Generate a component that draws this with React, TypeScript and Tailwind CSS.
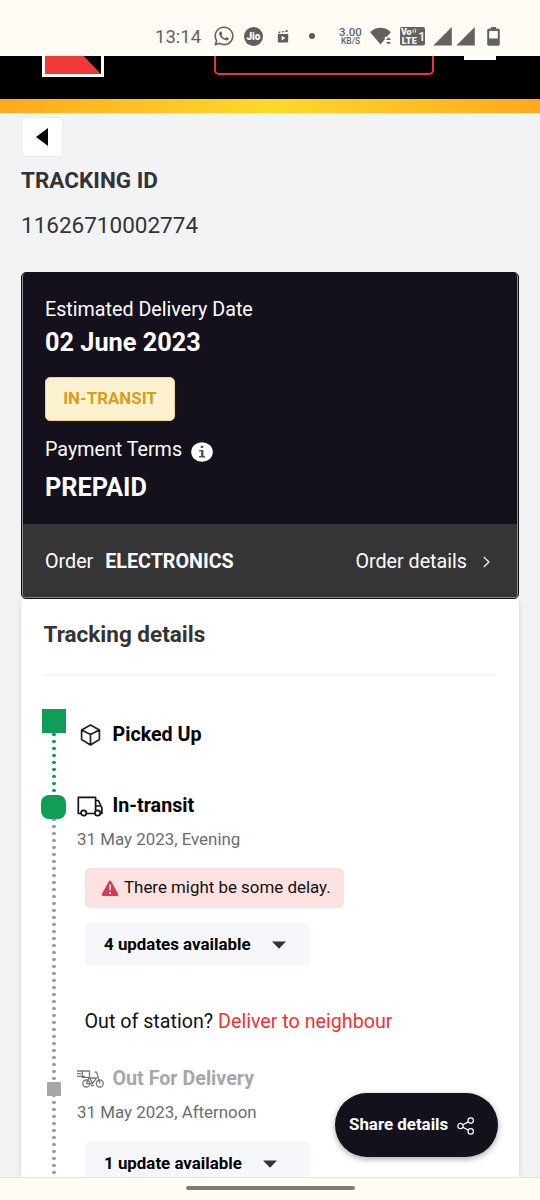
import { FaWhatsapp } from "react-icons/fa";
import { clsx } from "clsx";

// Status bar icons
function ClapperIcon() {
    return (
        <svg width="12" height="13" viewBox="0 0 12 13" fill="#605d5b">
            <path d="M1 3.2 2.2 1.4h1.6L2.6 3.2zM4.4 2.6 5.6.9h1.6L6 2.6zM7.8 2 9 .3h2.4L10.2 2zM.8 4h10.4v7.6a.8.8 0 0 1-.8.8H1.6a.8.8 0 0 1-.8-.8z" />
            <path d="M4.6 5.8v4.6L8.4 8.1z" fill="#fffcf6" />
        </svg>
    );
}

function WifiIcon() {
    return (
        <svg width="22" height="19" viewBox="0 0 22 19" fill="#65615f">
            <path d="M.2 5.2C5.8-.6 15.2-.6 20.8 5.2l-3.9 4.6h-2.1v2.5L10.5 17.4z" />
            <path d="M18.5 10.3 21 13h-5zM18.5 17.6 16 14.9h5z" />
        </svg>
    );
}

function VolteIcon() {
    return (
        <svg width="25" height="19" viewBox="0 0 25 19">
            <rect width="25" height="18.5" rx="1.8" fill="#65615f" />
            <g fill="#fffcf6" fontFamily="Roboto, sans-serif" fontWeight="900">
                <text x="1" y="8.3" fontSize="9" textLength="10.5">Vo</text>
                <text x="1.7" y="16.8" fontSize="9" textLength="15">LTE</text>
                <text x="18.3" y="14" fontSize="12.5" fontWeight="500" textLength="5">1</text>
            </g>
            <path d="M12.5 2.4q1.4 1.3.5 3.2M14.7 1.5q1.8 1.8.5 4.2" fill="none" stroke="#fffcf6" strokeWidth="1" />
        </svg>
    );
}

function SignalIcon() {
    return (
        <svg width="19" height="19" viewBox="0 0 19 19" fill="#65615f">
            <path d="M18.8 0v18.4H.3z" />
        </svg>
    );
}

function BatteryIcon() {
    return (
        <svg width="13" height="19" viewBox="0 0 13 19" fill="#65615f">
            <path fillRule="evenodd" d="M4 0h5v1.5h2.2A1.6 1.6 0 0 1 12.8 3v14.3a1.4 1.4 0 0 1-1.4 1.4H1.6A1.4 1.4 0 0 1 .2 17.3V3a1.6 1.6 0 0 1 1.6-1.5H4zM2.2 4v7.5h8.6V4z" />
        </svg>
    );
}

// Timeline icons
function BoxIcon() {
    return (
        <svg width="21" height="22" viewBox="0 0 21 22" fill="none" stroke="#222" strokeWidth="1.7" strokeLinejoin="round" strokeLinecap="round">
            <path d="M10.5 1 19.4 5.9v9.6l-8.9 5.4-8.9-5.4V5.9zM1.6 5.9l8.9 4.5 8.9-4.5M10.5 10.4v10.5" />
        </svg>
    );
}

function TruckIcon() {
    return (
        <svg width="26" height="21" viewBox="0 0 26 21" fill="none" stroke="#111" strokeWidth="1.7" strokeLinejoin="round">
            <path d="M4 17.5H1.3V1.4h17.3v16.1H9.4M18.6 4.5h2.8l2.3 5 1.2 2.5v5.5h-.8M18.6 10h5" />
            <circle cx="6.7" cy="17" r="2.7" fill="#fff" />
            <circle cx="20.6" cy="17" r="2.7" fill="#fff" />
        </svg>
    );
}

function BikeIcon() {
    return (
        <svg width="27" height="20" viewBox="0 0 27 20" fill="none" stroke="#77787a" strokeWidth="1.3">
            <path d="M0 2h12.5v6.4H5.3V2M0 4.7h4M0 7.4h8" />
            <circle cx="9.3" cy="14.5" r="3.5" />
            <circle cx="22.8" cy="14.5" r="3.5" />
            <path d="M9.3 14.5 12 9h7.5l-4 5.5H9.3M12.5 8.4l3 6M17.5 3.2h2.2l3.1 11.3M11 9h3M14 16.5h3" />
        </svg>
    );
}

function WarningIcon() {
    return (
        <svg width="18" height="17" viewBox="0 0 18 17">
            <path d="M9 1.8 16 14.6H2z" fill="#d5385a" stroke="#d5385a" strokeWidth="2.6" strokeLinejoin="round" />
            <path d="M9 4.5v5.8M9 12v2" stroke="#fbe1df" strokeWidth="1.8" />
        </svg>
    );
}

function ShareIcon() {
    return (
        <svg width="18" height="18" viewBox="0 0 18 18" fill="none" stroke="#fff" strokeWidth="1.2">
            <circle cx="3.5" cy="9" r="2.7" />
            <circle cx="13.7" cy="3.6" r="2.7" />
            <circle cx="13.7" cy="14.4" r="2.7" />
            <path d="M5.9 7.7 11.3 4.9M5.9 10.3l5.4 2.8" />
        </svg>
    );
}

function InfoIcon() {
    return (
        <svg width="22" height="20" viewBox="0 0 22 20">
            <ellipse cx="11" cy="10" rx="10.8" ry="9.8" fill="#fff" />
            <path d="M9.7 3.7h2.6v2.2H9.7zM8.2 8h4.3v6h1.5v1.5H8V14h2V9.5H8.2z" fill="#555" />
        </svg>
    );
}

function StatusBar() {
    return (
        <div className="flex h-14 shrink-0 items-start bg-[#fffcf6] pl-[155px] pt-[26px] text-[#65615f]">
            <span className="w-[58px] text-[18.5px] leading-[22px]">13:14</span>
            <FaWhatsapp size={22} className="-mt-px" />
            <span className="ml-[9px] mt-px flex size-[19px] items-center justify-center rounded-full bg-[#605d5b] text-[10px] font-black text-white">Jio</span>
            <span className="ml-[14px] mt-[4px]"><ClapperIcon /></span>
            <span className="ml-[20px] mt-[7px] size-[6px] rounded-full bg-[#605d5b]" />
            <span className="ml-[22px] mt-px flex w-[27px] flex-col items-center whitespace-nowrap font-medium">
                <span className="text-[11.5px] leading-[10px]">3.00</span>
                <span className="text-[8.5px] leading-[9px]">KB/S</span>
            </span>
            <span className="ml-[6px] mt-px"><WifiIcon /></span>
            <span className="ml-[8px] mt-px"><VolteIcon /></span>
            <span className="ml-[8px] mt-px"><SignalIcon /></span>
            <span className="ml-[4px] mt-px"><SignalIcon /></span>
            <span className="ml-[12px] mt-px"><BatteryIcon /></span>
        </div>
    );
}

function Header() {
    return (
        <header className="shrink-0">
            <div className="flex h-[43px] items-start bg-black pl-[42px]">
                <div className="h-[21px] w-[62px] border-x-[3px] border-b-[3px] border-white">
                    <svg width="56" height="18" viewBox="0 0 56 18" className="block">
                        <path d="M0 0h39l17 18H0z" fill="#f03a38" />
                        <path d="M39 0h17v18z" fill="#000" />
                    </svg>
                </div>
                <div className="ml-[110px] h-[19px] w-[220px] rounded-b-[5px] border-x-2 border-b-2 border-[#ee3338]" />
                <div className="ml-[30px] h-1 w-[32px] bg-white" />
            </div>
            <div className="h-[14px] bg-[linear-gradient(90deg,#ffa91c,#ffd927_50%,#ffa91c)]" />
        </header>
    );
}

function SummaryCard() {
    return (
        <section className="h-[327px] rounded-[5px] border border-[#14111d] bg-[#14111d]">
            <div className="flex h-full flex-col overflow-hidden rounded-[4px] border border-t-0 border-[#8b8a8f] text-white">
                <div className="flex h-[251px] shrink-0 flex-col items-start px-[22px] pt-[25px]">
                    <p className="text-[19.7px] leading-6">Estimated Delivery Date</p>
                    <p className="mt-[6px] text-[25.3px] font-bold leading-[30px]">02 June 2023</p>
                    <span className="mt-[19px] flex h-[44px] w-[130px] items-center justify-center rounded-[5px] border border-[#f0d27c] bg-[#fdf2d0] text-[16.9px] font-bold text-[#d69d1f]">
                        IN-TRANSIT
                    </span>
                    <p className="mt-[17px] flex items-center gap-[9px] text-[19.7px] leading-6">
                        Payment Terms
                        <span className="mt-[4px]"><InfoIcon /></span>
                    </p>
                    <p className="mt-[11px] text-[25.3px] font-bold leading-[30px]">PREPAID</p>
                </div>
                <div className="flex flex-1 items-center bg-[#353535] pl-[22px] pr-[27px] pt-[2px] text-[19.7px]">
                    <span>Order</span>
                    <span className="ml-3 font-bold">ELECTRONICS</span>
                    <span className="ml-auto">Order details</span>
                    <svg width="7" height="12" viewBox="0 0 7 12" className="ml-[16px]" fill="none" stroke="#fff" strokeWidth="1.2">
                        <path d="M.8 1 6 6 .8 11" />
                    </svg>
                </div>
            </div>
        </section>
    );
}

function Rail() {
    return (
        <div className="flex w-[25px] flex-col items-center">
            <div className="h-6 w-6 shrink-0 bg-[#0f9d58]" />
            <div className="h-[62px] w-1 shrink-0 bg-[radial-gradient(circle,#0f9d58_1.5px,transparent_2.1px)] bg-[length:4px_7px] bg-[position:0_5px]" />
            <div className="h-6 w-[25px] shrink-0 rounded-[8px] bg-[#0f9d58]" />
            <div className="h-[263px] w-1 shrink-0 bg-[radial-gradient(circle,#9d9d9d_1.5px,transparent_2.1px)] bg-[length:4px_7px] bg-[position:0_4px]" />
            <div className="ml-px size-[14px] shrink-0 bg-[#a6a7a9]" />
            <div className="w-1 flex-1 bg-[radial-gradient(circle,#9d9d9d_1.5px,transparent_2.1px)] bg-[length:4px_7px] bg-[position:0_3px]" />
        </div>
    );
}

function StepTitle({ icon, title, muted }: { icon: React.ReactNode; title: string; muted?: boolean }) {
    return (
        <div className={clsx("flex h-6 items-center text-[19.7px] font-bold", muted ? "text-[#a6a7a9]" : "text-black")}>
            <span className="flex w-[35.5px]">{icon}</span>
            {title}
        </div>
    );
}

function UpdatesButton({ label }: { label: string }) {
    return (
        <button className="ml-[8px] flex h-[43px] w-[225px] shrink-0 items-center gap-[21px] rounded-[4px] bg-[#f6f7fa] pl-[19px] text-[16.9px] font-bold text-black">
            {label}
            <svg width="14" height="8" viewBox="0 0 14 8" fill="#333">
                <path d="M0 .5h14L7 7.7z" />
            </svg>
        </button>
    );
}

function TrackingCard() {
    return (
        <section className="flex min-h-0 flex-1 flex-col rounded-t-[5px] bg-white pt-[23px] shadow-[0_1px_5px_rgba(0,0,0,0.15)]">
            <h2 className="pl-[22.5px] text-[22.5px] font-bold leading-6 text-[#333]">Tracking details</h2>
            <div className="mx-[23px] mt-[28px] h-[2px] shrink-0 bg-[#f4f4f5]" />
            <div className="mt-[33px] flex min-h-0 flex-1 overflow-hidden pl-[20px]">
                <Rail />
                <div className="flex flex-col pl-[11px] pt-[14px]">
                    <StepTitle icon={<span className="ml-[3px]"><BoxIcon /></span>} title="Picked Up" />
                    <div className="mt-[47px]">
                        <StepTitle icon={<span><TruckIcon /></span>} title="In-transit" />
                    </div>
                    <p className="mt-[11px] text-[16.9px] leading-5 text-[#6b6d70]">31 May 2023, Evening</p>
                    <div className="ml-[8px] mt-[19px] flex h-10 w-[259px] shrink-0 items-center rounded-[5px] bg-[#fbe1df] pl-4 text-[16.9px] text-[#111]">
                        <WarningIcon />
                        <span className="ml-[5px]">There might be some delay.</span>
                    </div>
                    <div className="mt-[15px]"><UpdatesButton label="4 updates available" /></div>
                    <p className="ml-[7.5px] mt-[44px] text-[19.7px] leading-6 text-[#111]">
                        Out of station? <a className="text-[#ee3338]">Deliver to neighbour</a>
                    </p>
                    <div className="mt-[33px]">
                        <StepTitle icon={<BikeIcon />} title="Out For Delivery" muted />
                    </div>
                    <p className="mt-[11px] text-[16.9px] leading-5 text-[#6b6d70]">31 May 2023, Afternoon</p>
                    <div className="mt-[20px]"><UpdatesButton label="1 update available" /></div>
                </div>
            </div>
        </section>
    );
}

export default function App() {
    return (
        <div className="relative flex h-[1200px] w-[540px] flex-col overflow-hidden bg-[#f1f3f5] font-[Roboto,sans-serif]">
            <StatusBar />
            <Header />
            <main className="flex min-h-0 flex-1 flex-col overflow-hidden px-[21px] pt-[4px]">
                <button className="flex h-10 w-[42px] shrink-0 items-center justify-center rounded-[5px] border border-[#ececee] bg-white">
                    <svg width="12" height="18" viewBox="0 0 12 18"><path d="M12 0v18L0 9z" /></svg>
                </button>
                <h1 className="mt-[11px] text-[22.5px] font-bold leading-6 text-[#333]">TRACKING ID</h1>
                <p className="mb-[35px] mt-[21px] text-[22.5px] leading-6 text-[#333]">11626710002774</p>
                <SummaryCard />
                <TrackingCard />
            </main>

            {/* Floating share button */}
            <button className="absolute bottom-[43px] right-[42px] flex h-[64px] w-[163px] items-center rounded-full bg-[#14111d] pl-[14px] text-[16.9px] font-bold text-white shadow-[0_2px_6px_rgba(0,0,0,0.35)]">
                Share details
                <span className="ml-[9px] mt-[2px]"><ShareIcon /></span>
            </button>

            <footer className="flex h-[23px] shrink-0 justify-center border-t border-[#ebe4d5] bg-[#fffcf6] pt-[8px]">
                <div className="h-1 w-[169px] rounded-full bg-[#807b76]" />
            </footer>
        </div>
    );
}
